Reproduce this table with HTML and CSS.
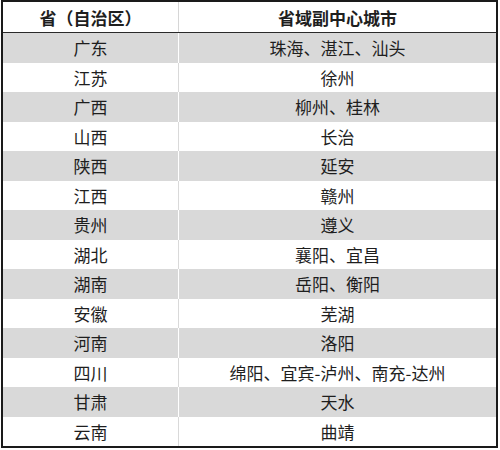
FILE: index.html
```html
<!DOCTYPE html>
<html lang="zh">
<head>
<meta charset="utf-8">
<link rel="stylesheet" href="styles.css">
</head>
<body>
<div class="table">
  <div class="row head"><div class="c1">省（自治区）</div><div class="c2">省域副中心城市</div></div>
  <div class="row g"><div class="c1">广东</div><div class="c2">珠海、湛江、汕头</div></div>
  <div class="row w"><div class="c1">江苏</div><div class="c2">徐州</div></div>
  <div class="row g"><div class="c1">广西</div><div class="c2">柳州、桂林</div></div>
  <div class="row w"><div class="c1">山西</div><div class="c2">长治</div></div>
  <div class="row g"><div class="c1">陕西</div><div class="c2">延安</div></div>
  <div class="row w"><div class="c1">江西</div><div class="c2">赣州</div></div>
  <div class="row g"><div class="c1">贵州</div><div class="c2">遵义</div></div>
  <div class="row w"><div class="c1">湖北</div><div class="c2">襄阳、宜昌</div></div>
  <div class="row g"><div class="c1">湖南</div><div class="c2">岳阳、衡阳</div></div>
  <div class="row w"><div class="c1">安徽</div><div class="c2">芜湖</div></div>
  <div class="row g"><div class="c1">河南</div><div class="c2">洛阳</div></div>
  <div class="row w"><div class="c1">四川</div><div class="c2">绵阳、宜宾-泸州、南充-达州</div></div>
  <div class="row g"><div class="c1">甘肃</div><div class="c2">天水</div></div>
  <div class="row w"><div class="c1">云南</div><div class="c2">曲靖</div></div>
</div>
</body>
</html>
```
FILE: styles.css
```css
html, body {
  margin: 0;
  padding: 0;
  background: #ffffff;
}
body {
  padding: 0 2px 0 1px;
  font-family: "Noto Sans CJK SC", "Noto Sans", sans-serif;
  color: #1e1e1e;
}
.table {
  width: 497px;
  height: 448px;
  box-sizing: border-box;
  border: 2px solid #1a1a1a;
  display: grid;
  grid-template-rows: 31px repeat(14, 1fr);
}
.row {
  display: grid;
  grid-template-columns: 176px 1fr;
  font-size: 17px;
  line-height: 1;
}
.row > div {
  display: flex;
  align-items: center;
  justify-content: center;
}
.head {
  font-weight: bold;
  background: #ffffff;
  border-bottom: 1px solid #2a2a2a;
}
.head .c1 { border-right: 1px solid #d6d6d6; }
.g { background: #d9d9d9; }
.g .c1 { border-right: 1px solid #ffffff; }
.w { background: #ffffff; }
.w .c1 { border-right: 1px solid #d9d9d9; }
```
